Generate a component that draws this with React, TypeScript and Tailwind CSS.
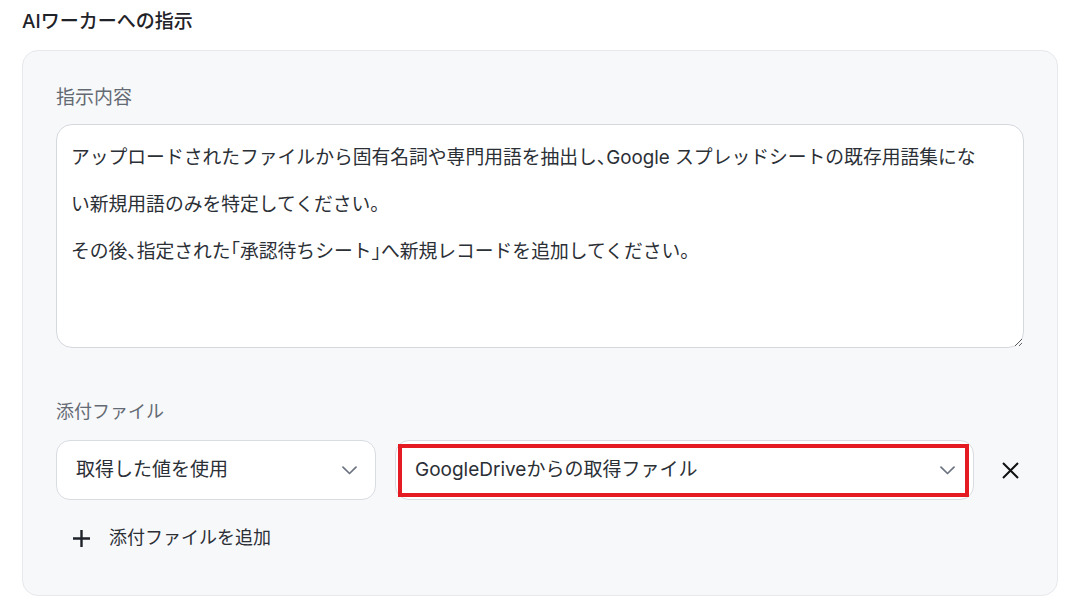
const font = "font-['Inter','Noto_Sans_CJK_JP',sans-serif]";

const instruction =
  "アップロードされたファイルから固有名詞や専門用語を抽出し、Google スプレッドシートの既存用語集にな\nい新規用語のみを特定してください。\nその後、指定された「承認待ちシート」へ新規レコードを追加してください。";

const Chevron = () => (
  <svg width="15" height="9" viewBox="0 0 15 9" fill="none" stroke="#6b7280" strokeWidth="1.7" strokeLinecap="round" strokeLinejoin="round">
    <path d="M1 1.2l6.5 6.3L14 1.2" />
  </svg>
);

const SelectBox = ({
  label,
  className,
  highlighted,
}: {
  label: string;
  className: string;
  highlighted?: boolean;
}) => (
  <div
    className={`relative flex h-[60px] shrink-0 items-center justify-between rounded-[14px] border border-[#d9dce1] bg-white pl-[19px] pr-[18px] ${className}`}
  >
    <span className="text-[19px] text-[#2b2f36]">{label}</span>
    <Chevron />
    {highlighted && (
      <div className="pointer-events-none absolute left-[2px] right-[4px] top-[3px] bottom-[2px] border-[4px] border-[#e41b22]" />
    )}
  </div>
);

const App = () => {
  return (
    <div className={`min-h-screen bg-white pl-[22px] pr-[14px] pt-[8px] ${font}`}>
      <h2 className="text-[19px] font-medium leading-[28px] text-[#1f2329]">
        AIワーカーへの指示
      </h2>

      <div className="mt-[14px] rounded-[16px] border border-[#e6e8eb] bg-[#f7f8fa] px-[33px] pt-[34px] pb-[44px]">
        <p className="text-[19px] leading-[26px] text-[#646a73]">指示内容</p>
        <textarea
          readOnly
          defaultValue={instruction}
          className="mt-[13px] block h-[224px] w-full resize-y rounded-[16px] border border-[#d5d8dd] bg-white px-[14px] pt-[9px] text-[18.8px] leading-[47px] text-[#2b2f36] outline-none [font-feature-settings:'halt']"
        />

        <p className="mt-[51px] text-[18px] leading-[26px] text-[#646a73]">添付ファイル</p>
        <div className="mt-[15px] flex items-center">
          <SelectBox label="取得した値を使用" className="w-[320px]" />
          <SelectBox
            label="GoogleDriveからの取得ファイル"
            className="ml-[19px] w-[579px]"
            highlighted
          />
          <button className="ml-[27px] flex h-[18px] w-[18px] items-center justify-center">
            <svg width="17" height="17" viewBox="0 0 17 17" fill="none" stroke="#111" strokeWidth="2">
              <path d="M1 1l15 15M16 1L1 16" />
            </svg>
          </button>
        </div>

        <button className="mt-[25px] flex items-center gap-[18px] pl-[16px] text-[18px] leading-[26px] text-[#2b2f36]">
          <svg width="19" height="19" viewBox="0 0 19 19" fill="none" stroke="#1f2329" strokeWidth="2.4">
            <path d="M9.5 1v17M1 9.5h17" />
          </svg>
          添付ファイルを追加
        </button>
      </div>
    </div>
  );
};

export default App;
